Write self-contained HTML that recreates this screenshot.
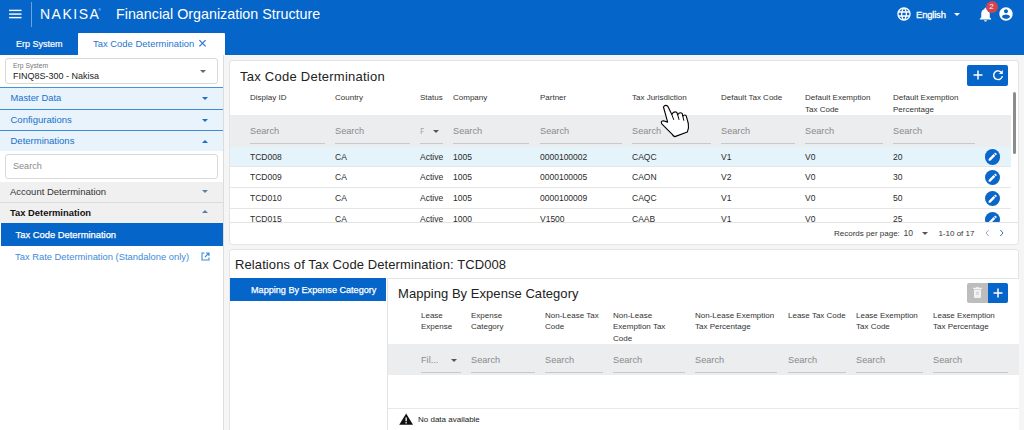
<!DOCTYPE html>
<html lang="en">
<head>
<meta charset="utf-8">
<title>Financial Organization Structure</title>
<style>
*{box-sizing:border-box;margin:0;padding:0}
html,body{width:1024px;height:430px;overflow:hidden}
body{position:relative;background:#f5f5f5;font-family:"Liberation Sans","DejaVu Sans",sans-serif;font-size:9px;color:#222}
.abs{position:absolute}
.t{position:absolute;white-space:nowrap;line-height:1}
#hdr{left:0;top:0;width:1024px;height:55px;background:#0565c8}
#side{left:0;top:55px;width:224px;height:375px;background:#fff;border-right:1px solid #dcdcdc}
.card{position:absolute;background:#fff;border:1px solid #e4e4e4;border-radius:3px}
.acc{position:absolute;left:0;width:223px;background:#e8f3fb;border-top:1px solid #3d8bd6}
.acc .t{left:10.500px;top:6px;font-size:9.500px;color:#1a6fc9}
.caret-d{position:absolute;width:0;height:0;border-left:3.5px solid transparent;border-right:3.5px solid transparent;border-top:3.500px solid #1a6fc9}
.caret-u{position:absolute;width:0;height:0;border-left:3.5px solid transparent;border-right:3.5px solid transparent;border-bottom:3.500px solid #1a6fc9}
.th{position:absolute;font-size:8px;line-height:11.400px;color:#333;white-space:nowrap}
.sr{position:absolute;font-size:9.200px;color:#8a8a8a;line-height:1;white-space:nowrap}
.ul{position:absolute;height:1px;background:#c9c9c9}
.td{position:absolute;font-size:8.500px;color:#2b2b2b;line-height:1;white-space:nowrap}
.row{position:absolute;left:230px;width:781px;height:20.700px;border-bottom:1px solid #e6e6e6}
.edit{position:absolute;width:15.400px;height:15.400px;border-radius:50%;background:#0a66c8}
.edit svg{display:block}
</style>
</head>
<body>

<!-- HEADER -->
<div id="hdr" class="abs">
  <svg class="abs" style="left:9px;top:9px" width="13" height="10" viewBox="0 0 13 10"><rect x="0.1" y="0.7" width="12.4" height="1.4" fill="#fff"/><rect x="0.1" y="4.4" width="12.4" height="1.4" fill="#fff"/><rect x="0.1" y="7.9" width="12.4" height="1.4" fill="#fff"/></svg>
  <div class="abs" style="left:31px;top:2px;width:1px;height:25px;background:#6aa3e0"></div>
  <div class="t" style="left:40px;top:7px;font-size:14px;letter-spacing:1.5px;color:#fff">NAKISA</div><div class="t" style="left:98.500px;top:9px;font-size:3px;color:#fff">®</div>
  <div class="t" style="left:116px;top:7.400px;font-size:14.300px;color:#fff">Financial Organization Structure</div>
  <div class="t" style="left:16px;top:40px;font-size:9px;-webkit-text-stroke:0.200px #fff;color:#fff">Erp System</div>
  <div class="abs" style="left:78px;top:32.600px;width:147.300px;height:23.400px;background:#fff;border-radius:1px 1px 0 0"></div>
  <div class="t" style="left:93px;top:38.800px;font-size:9.400px;letter-spacing:0.030px;color:#2575cf">Tax Code Determination</div>
  <svg class="abs" style="left:198px;top:39px" width="9" height="9" viewBox="0 0 9 9"><path d="M1.400 1.200 L7.600 7.400 M7.600 1.200 L1.400 7.400" stroke="#2575cf" stroke-width="1.200" fill="none"/></svg>

  <!-- globe -->
  <svg class="abs" style="left:896px;top:6px" width="16" height="16" viewBox="0 0 24 24"><path fill="#fff" d="M11.990 2C6.470 2 2 6.480 2 12s4.470 10 9.990 10C17.520 22 22 17.520 22 12S17.520 2 11.990 2zm6.930 6h-2.950c-.32-1.250-.78-2.450-1.380-3.560 1.840.63 3.370 1.910 4.330 3.560zM12 4.040c.83 1.200 1.480 2.530 1.910 3.960h-3.820c.43-1.430 1.080-2.760 1.910-3.960zM4.260 14C4.100 13.360 4 12.690 4 12s.1-1.360.26-2h3.380c-.08.66-.14 1.320-.14 2 0 .68.06 1.340.14 2H4.260zm.82 2h2.950c.32 1.250.78 2.450 1.380 3.560-1.840-.63-3.370-1.900-4.330-3.560zm2.950-8H5.080c.96-1.660 2.490-2.930 4.330-3.560C8.810 5.550 8.350 6.750 8.030 8zM12 19.960c-.83-1.200-1.480-2.530-1.910-3.960h3.820c-.43 1.430-1.080 2.760-1.910 3.960zM14.340 14H9.660c-.09-.66-.16-1.320-.16-2 0-.68.07-1.350.16-2h4.680c.09.65.16 1.320.16 2 0 .68-.07 1.340-.16 2zm.25 5.560c.6-1.110 1.060-2.310 1.380-3.560h2.950c-.96 1.650-2.490 2.930-4.330 3.560zM16.360 14c.08-.66.14-1.320.14-2 0-.68-.06-1.340-.14-2h3.380c.16.64.26 1.310.26 2s-.1 1.360-.26 2h-3.380z"/></svg>
  <div class="t" style="left:916px;top:9.500px;font-size:9.500px;letter-spacing:-0.200px;-webkit-text-stroke:0.300px #fff;color:#fff">English</div>
  <div class="abs" style="left:954px;top:13px;width:0;height:0;border-left:3.500px solid transparent;border-right:3.500px solid transparent;border-top:3.500px solid #fff"></div>
  <!-- bell -->
  <svg class="abs" style="left:977px;top:5.500px" width="17" height="17" viewBox="0 0 24 24"><path fill="#fff" d="M12 22c1.100 0 2-.9 2-2h-4c0 1.100.89 2 2 2zm6-6v-5c0-3.070-1.640-5.640-4.500-6.320V4c0-.83-.67-1.500-1.500-1.500s-1.500.67-1.500 1.500v.68C7.630 5.360 6 7.920 6 11v5l-2 2v1h16v-1l-2-2z"/></svg>
  <div class="abs" style="left:985.500px;top:1px;width:12px;height:12px;border-radius:50%;background:#d6424d"></div>
  <div class="t" style="left:989.300px;top:3px;font-size:8px;color:#fff">2</div>
  <!-- user -->
  <svg class="abs" style="left:998px;top:6px" width="16" height="16" viewBox="0 0 24 24"><path fill="#fff" d="M12 2C6.480 2 2 6.480 2 12s4.480 10 10 10 10-4.480 10-10S17.520 2 12 2zm0 3c1.660 0 3 1.340 3 3s-1.340 3-3 3-3-1.340-3-3 1.340-3 3-3zm0 14.200c-2.500 0-4.710-1.280-6-3.220.03-1.990 4-3.080 6-3.080 1.990 0 5.970 1.090 6 3.080-1.290 1.940-3.500 3.220-6 3.220z"/></svg>
</div>

<!-- SIDEBAR -->
<div id="side" class="abs"></div>
<div class="abs" style="left:5px;top:58px;width:213px;height:26px;border:1px solid #d9d9d9;border-radius:3px;background:#fff"></div>
<div class="t" style="left:13px;top:63px;font-size:6.800px;color:#777">Erp System</div>
<div class="t" style="left:13px;top:71.700px;font-size:9px;color:#222">FINQ8S-300 - Nakisa</div>
<div class="caret-d" style="left:200px;top:70px;border-top-color:#666"></div>

<div class="acc" style="top:87px;height:22.400px;border-top:1.800px solid #4a90d9"><div class="t" style="font-size:9.300px;top:5.800px">Master Data</div><div class="caret-d" style="left:202px;top:9px"></div></div>
<div class="acc" style="top:108.600px;height:22px"><div class="t" style="top:5px">Configurations</div><div class="caret-d" style="left:202px;top:9px"></div></div>
<div class="acc" style="top:129.800px;height:21.200px"><div class="t" style="top:5.200px">Determinations</div><div class="caret-u" style="left:202px;top:9px"></div></div>

<div class="abs" style="left:5px;top:154px;width:213px;height:25px;border:1px solid #d9d9d9;border-radius:3px;background:#fff"></div>
<div class="t" style="left:13px;top:162px;font-size:9.100px;color:#8a8a8a">Search</div>

<div class="abs" style="left:0;top:182px;width:223px;height:21px;background:#f0f0f0;border-bottom:1px solid #dcdcdc"></div>
<div class="t" style="left:10px;top:187px;font-size:9.500px;color:#333">Account Determination</div>
<div class="caret-d" style="left:202px;top:190px;border-top-color:#5a7fa8"></div>
<div class="abs" style="left:0;top:203px;width:223px;height:20px;background:#f0f0f0"></div>
<div class="t" style="left:10px;top:207.500px;font-size:9.400px;color:#111;font-weight:bold">Tax Determination</div>
<div class="caret-u" style="left:202px;top:210px;border-bottom-color:#5a7fa8"></div>
<div class="abs" style="left:1px;top:223px;width:222px;height:23px;background:#0565c8"></div>
<div class="t" style="left:15.500px;top:230px;font-size:9.400px;-webkit-text-stroke:0.250px #fff;color:#fff">Tax Code Determination</div>
<div class="t" style="left:15px;top:252px;font-size:9.400px;color:#3d8bd6">Tax Rate Determination (Standalone only)</div>
<svg class="abs" style="left:201px;top:252px" width="9" height="9" viewBox="0 0 9 9"><path d="M3.500 1H1v7h7V5.500" fill="none" stroke="#3d8bd6" stroke-width="1.100"/><path d="M5 1h3v3M8 1L4 5" fill="none" stroke="#3d8bd6" stroke-width="1.100"/></svg>

<!-- CARD 1 -->
<div class="card" style="left:229px;top:60px;width:790px;height:184.500px"></div>
<div class="t" style="left:240px;top:69.500px;font-size:13px;letter-spacing:0.250px;color:#222">Tax Code Determination</div>
<div class="abs" style="left:967px;top:65px;width:41px;height:21px;background:#0565c8;border-radius:2px"></div>
<svg class="abs" style="left:972px;top:69px" width="12" height="12" viewBox="0 0 12 12"><path d="M6 1.500v9M1.500 6h9" stroke="#fff" stroke-width="1.500" fill="none"/></svg>
<svg class="abs" style="left:992px;top:69px" width="12" height="12" viewBox="0 0 12 12"><path d="M9.600 3.600A4.400 4.400 0 1 0 10.400 7" stroke="#fff" stroke-width="1.400" fill="none"/><path d="M10.800 1v4h-4z" fill="#fff"/></svg>

<div class="th" style="left:250px;top:92.400px">Display ID</div>
<div class="th" style="left:335px;top:92.400px">Country</div>
<div class="th" style="left:420px;top:92.400px">Status</div>
<div class="th" style="left:453px;top:92.400px">Company</div>
<div class="th" style="left:540px;top:92.400px">Partner</div>
<div class="th" style="left:632px;top:92.400px">Tax Jurisdiction</div>
<div class="th" style="left:721px;top:92.400px">Default Tax Code</div>
<div class="th" style="left:805px;top:92.400px">Default Exemption<br>Tax Code</div>
<div class="th" style="left:893px;top:92.400px">Default Exemption<br>Percentage</div>

<div class="abs" style="left:230px;top:115px;width:781px;height:32px;background:#ecedef"></div>
<div class="sr" style="left:250px;top:127.200px">Search</div><div class="ul" style="left:250px;top:143px;width:75px"></div>
<div class="sr" style="left:335px;top:127.200px">Search</div><div class="ul" style="left:335px;top:143px;width:75px"></div>
<div class="sr" style="left:420px;top:127.200px;width:4px;overflow:hidden;color:#aaa">F</div><div class="ul" style="left:420px;top:143px;width:23px"></div>
<div class="caret-d" style="left:433px;top:129.500px;border-top-color:#555;border-left-width:3px;border-right-width:3px;border-top-width:3px"></div>
<div class="sr" style="left:453px;top:127.200px">Search</div><div class="ul" style="left:453px;top:143px;width:76px"></div>
<div class="sr" style="left:540px;top:127.200px">Search</div><div class="ul" style="left:540px;top:143px;width:82px"></div>
<div class="sr" style="left:632px;top:127.200px">Search</div><div class="ul" style="left:632px;top:143px;width:79px"></div>
<div class="sr" style="left:721px;top:127.200px">Search</div><div class="ul" style="left:721px;top:143px;width:74px"></div>
<div class="sr" style="left:805px;top:127.200px">Search</div><div class="ul" style="left:805px;top:143px;width:78px"></div>
<div class="sr" style="left:893px;top:127.200px">Search</div><div class="ul" style="left:893px;top:143px;width:82px"></div>

<div class="abs" id="clip" style="left:0;top:0;width:1024px;height:222px;overflow:hidden">
<div class="row" style="top:146.8px;background:#e5f3fa"></div>
<div class="td" style="left:250px;top:152.6px">TCD008</div>
<div class="td" style="left:335px;top:152.6px">CA</div>
<div class="td" style="left:420px;top:152.6px">Active</div>
<div class="td" style="left:453px;top:152.6px">1005</div>
<div class="td" style="left:540px;top:152.6px">0000100002</div>
<div class="td" style="left:632px;top:152.6px">CAQC</div>
<div class="td" style="left:721px;top:152.6px">V1</div>
<div class="td" style="left:805px;top:152.6px">V0</div>
<div class="td" style="left:893px;top:152.6px">20</div>
<div class="edit" style="left:985px;top:149.4px"><svg width="15.400" height="15.400" viewBox="0 0 24 24"><path transform="translate(3.600 3.600) scale(0.7)" d="M3 17.250V21h3.750L17.810 9.940l-3.750-3.750L3 17.250zM20.710 7.040c.39-.39.39-1.020 0-1.410l-2.340-2.340c-.39-.39-1.020-.39-1.410 0l-1.830 1.830 3.750 3.750 1.830-1.830z" fill="#fff"/></svg></div>
<div class="row" style="top:167.5px"></div>
<div class="td" style="left:250px;top:173.3px">TCD009</div>
<div class="td" style="left:335px;top:173.3px">CA</div>
<div class="td" style="left:420px;top:173.3px">Active</div>
<div class="td" style="left:453px;top:173.3px">1005</div>
<div class="td" style="left:540px;top:173.3px">0000100005</div>
<div class="td" style="left:632px;top:173.3px">CAON</div>
<div class="td" style="left:721px;top:173.3px">V2</div>
<div class="td" style="left:805px;top:173.3px">V0</div>
<div class="td" style="left:893px;top:173.3px">30</div>
<div class="edit" style="left:985px;top:170.1px"><svg width="15.400" height="15.400" viewBox="0 0 24 24"><path transform="translate(3.600 3.600) scale(0.7)" d="M3 17.250V21h3.750L17.810 9.940l-3.750-3.750L3 17.250zM20.710 7.040c.39-.39.39-1.020 0-1.410l-2.340-2.340c-.39-.39-1.020-.39-1.410 0l-1.830 1.830 3.750 3.750 1.830-1.830z" fill="#fff"/></svg></div>
<div class="row" style="top:188.2px"></div>
<div class="td" style="left:250px;top:194.0px">TCD010</div>
<div class="td" style="left:335px;top:194.0px">CA</div>
<div class="td" style="left:420px;top:194.0px">Active</div>
<div class="td" style="left:453px;top:194.0px">1005</div>
<div class="td" style="left:540px;top:194.0px">0000100009</div>
<div class="td" style="left:632px;top:194.0px">CAQC</div>
<div class="td" style="left:721px;top:194.0px">V1</div>
<div class="td" style="left:805px;top:194.0px">V0</div>
<div class="td" style="left:893px;top:194.0px">50</div>
<div class="edit" style="left:985px;top:190.8px"><svg width="15.400" height="15.400" viewBox="0 0 24 24"><path transform="translate(3.600 3.600) scale(0.7)" d="M3 17.250V21h3.750L17.810 9.940l-3.750-3.750L3 17.250zM20.710 7.040c.39-.39.39-1.020 0-1.410l-2.340-2.340c-.39-.39-1.020-.39-1.410 0l-1.830 1.830 3.750 3.750 1.830-1.830z" fill="#fff"/></svg></div>
<div class="row" style="top:209.0px"></div>
<div class="td" style="left:250px;top:214.8px">TCD015</div>
<div class="td" style="left:335px;top:214.8px">CA</div>
<div class="td" style="left:420px;top:214.8px">Active</div>
<div class="td" style="left:453px;top:214.8px">1000</div>
<div class="td" style="left:540px;top:214.8px">V1500</div>
<div class="td" style="left:632px;top:214.8px">CAAB</div>
<div class="td" style="left:721px;top:214.8px">V1</div>
<div class="td" style="left:805px;top:214.8px">V0</div>
<div class="td" style="left:893px;top:214.8px">25</div>
<div class="edit" style="left:985px;top:211.6px"><svg width="15.400" height="15.400" viewBox="0 0 24 24"><path transform="translate(3.600 3.600) scale(0.7)" d="M3 17.250V21h3.750L17.810 9.940l-3.750-3.750L3 17.250zM20.710 7.040c.39-.39.39-1.020 0-1.410l-2.340-2.340c-.39-.39-1.020-.39-1.410 0l-1.830 1.830 3.750 3.750 1.830-1.830z" fill="#fff"/></svg></div>
</div>
<div class="abs" style="left:230px;top:222px;width:788px;height:1px;background:#e3e3e3"></div>

<!-- pagination -->
<div class="t" style="left:834px;top:229.700px;font-size:8px;color:#333">Records per page:</div>
<div class="t" style="left:903.500px;top:229.400px;font-size:8.600px;color:#444">10</div>
<div class="caret-d" style="left:922.300px;top:232px;border-top-color:#555;border-left-width:3px;border-right-width:3px;border-top-width:3px"></div>
<div class="t" style="left:938.400px;top:229.700px;font-size:8px;color:#333">1-10 of 17</div>
<svg class="abs" style="left:984.500px;top:229.200px" width="5" height="8" viewBox="0 0 5 8"><path d="M3.700 1L1 4l2.700 3" stroke="#8fa6c8" stroke-width="1" fill="none"/></svg>
<svg class="abs" style="left:999px;top:229.200px" width="5" height="8" viewBox="0 0 5 8"><path d="M1.300 1l2.700 3-2.700 3" stroke="#3f6fb0" stroke-width="1" fill="none"/></svg>

<!-- scrollbar -->
<div class="abs" style="left:1013px;top:92px;width:3px;height:62px;background:#8c8c8c;border-radius:1.500px"></div>

<!-- CARD 2 -->
<div class="card" style="left:229px;top:249px;width:790px;height:190px"></div>
<div class="t" style="left:235px;top:258px;font-size:13px;letter-spacing:0.100px;color:#222">Relations of Tax Code Determination: TCD008</div>
<div class="abs" style="left:230px;top:278px;width:156px;height:23px;background:#0565c8"></div>
<div class="t" style="left:251px;top:286.300px;font-size:9.100px;-webkit-text-stroke:0.250px #fff;color:#fff">Mapping By Expense Category</div>
<div class="abs" style="left:387px;top:278px;width:632px;height:160px;background:#fff;border-left:1px solid #e4e4e4;border-top:1px solid #e4e4e4"></div>
<div class="t" style="left:398px;top:287px;font-size:13px;letter-spacing:0.050px;color:#222">Mapping By Expense Category</div>

<div class="abs" style="left:967px;top:282.700px;width:21px;height:20.300px;background:#bdbdbd;border-radius:2px 0 0 2px"></div>
<div class="abs" style="left:988px;top:282.700px;width:20px;height:20.300px;background:#0565c8;border-radius:0 2px 2px 0"></div>
<svg class="abs" style="left:973px;top:287.300px;opacity:.8" width="9" height="11" viewBox="0 0 9 11"><path d="M1 2.500h7v7.500a1 1 0 0 1-1 1H2a1 1 0 0 1-1-1z M0 .8h3l.6-.8h1.800l.6.800h3v1.100H0z" fill="#fff"/><path d="M3.200 5l2.600 2.600M5.800 5L3.200 7.600" stroke="#bdbdbd" stroke-width=".9"/></svg>
<svg class="abs" style="left:992px;top:287px" width="12" height="12" viewBox="0 0 12 12"><path d="M6 1.500v9M1.500 6h9" stroke="#fff" stroke-width="1.500" fill="none"/></svg>

<div class="th" style="left:421px;top:309.800px">Lease<br>Expense</div>
<div class="th" style="left:471px;top:309.800px">Expense<br>Category</div>
<div class="th" style="left:545px;top:309.800px">Non-Lease Tax<br>Code</div>
<div class="th" style="left:613px;top:309.800px">Non-Lease<br>Exemption Tax<br>Code</div>
<div class="th" style="left:695px;top:309.800px">Non-Lease Exemption<br>Tax Percentage</div>
<div class="th" style="left:788px;top:309.800px">Lease Tax Code</div>
<div class="th" style="left:856px;top:309.800px">Lease Exemption<br>Tax Code</div>
<div class="th" style="left:933px;top:309.800px">Lease Exemption<br>Tax Percentage</div>

<div class="abs" style="left:388px;top:344px;width:631px;height:31px;background:#ecedef"></div>
<div class="sr" style="left:421px;top:356.300px">Fil...</div><div class="ul" style="left:421px;top:372px;width:40px"></div>
<div class="caret-d" style="left:450.500px;top:358.500px;border-top-color:#555;border-left-width:3px;border-right-width:3px;border-top-width:3px"></div>
<div class="sr" style="left:471px;top:356.300px">Search</div><div class="ul" style="left:471px;top:372px;width:64px"></div>
<div class="sr" style="left:545px;top:356.300px">Search</div><div class="ul" style="left:545px;top:372px;width:58px"></div>
<div class="sr" style="left:613px;top:356.300px">Search</div><div class="ul" style="left:613px;top:372px;width:72px"></div>
<div class="sr" style="left:695px;top:356.300px">Search</div><div class="ul" style="left:695px;top:372px;width:82px"></div>
<div class="sr" style="left:788px;top:356.300px">Search</div><div class="ul" style="left:788px;top:372px;width:58px"></div>
<div class="sr" style="left:856px;top:356.300px">Search</div><div class="ul" style="left:856px;top:372px;width:67px"></div>
<div class="sr" style="left:933px;top:356.300px">Search</div><div class="ul" style="left:933px;top:372px;width:75px"></div>

<div class="abs" style="left:388px;top:408.300px;width:631px;height:1px;background:#e8e8e8"></div>
<svg class="abs" style="left:398.800px;top:412.800px" width="14.300" height="12.400" viewBox="0 0 13 12" preserveAspectRatio="none"><path d="M6.500 .5L12.800 11.500H.2z" fill="#111"/><rect x="5.900" y="4.300" width="1.200" height="3.700" fill="#fff"/><rect x="5.900" y="8.800" width="1.200" height="1.300" fill="#fff"/></svg>
<div class="t" style="left:418px;top:416px;font-size:8px;color:#222">No data available</div>

<!-- cursor -->
<svg class="abs" style="left:640px;top:90px" width="80" height="60" viewBox="0 0 573 430"><path d="M168 122 Q178 104 198 114 L228 176 Q240 150 263 160 L270 178 Q282 156 301 166 L307 188 Q320 172 331 186 L346 240 Q352 275 339 301 L250 334 Q238 331 231 318 L156 242 Q146 224 166 220 L198 230 Z" fill="#fff" stroke="#000" stroke-width="8" stroke-linejoin="round"/><path d="M228 176 L242 214 M270 178 L280 214 M307 188 L314 220" stroke="#000" stroke-width="7" fill="none"/></svg>
</body>
</html>
